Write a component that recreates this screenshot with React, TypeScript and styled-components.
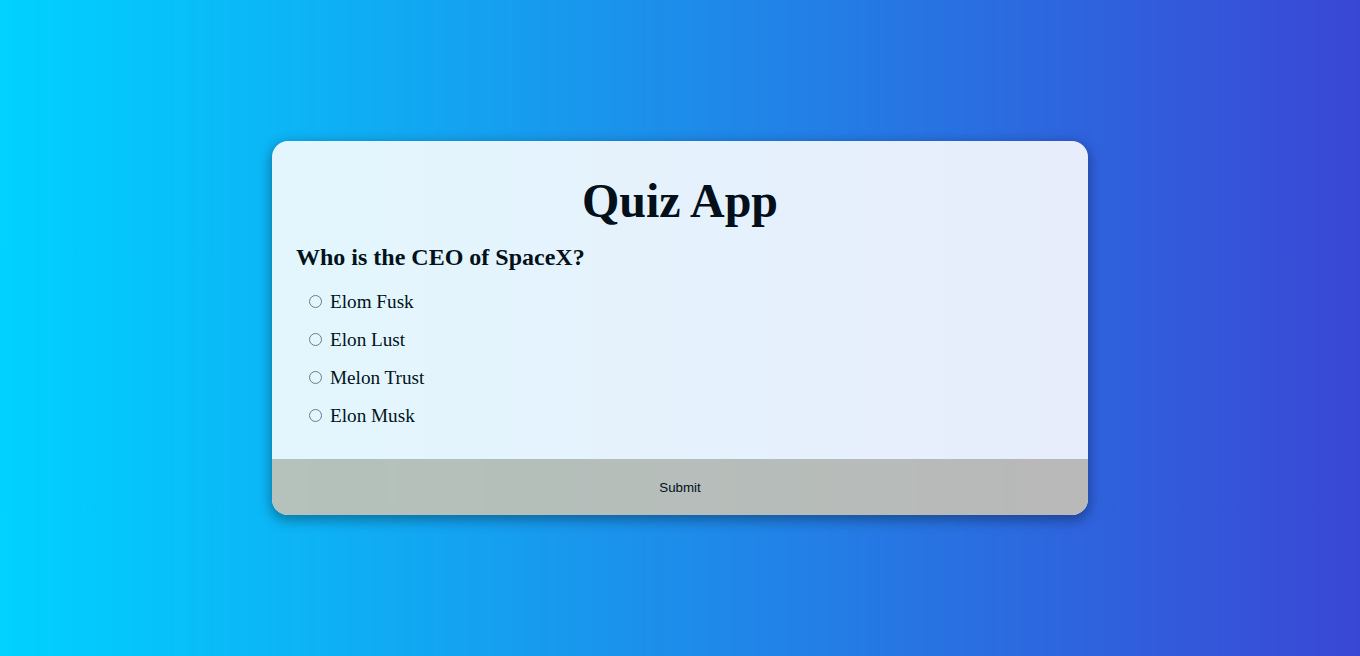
import React from "react";
import styled, { createGlobalStyle } from "styled-components";

const GlobalStyle = createGlobalStyle`
  html, body { margin: 0; padding: 0; }
  body {
    height: 100vh;
    background: linear-gradient(to right, #00d2ff, #3a47d5);
    font-family: "Liberation Serif", "Times New Roman", serif;
  }
  #root { height: 100%; }
`;

const Page = styled.div`
  height: 100%;
  display: flex;
  align-items: center;
  justify-content: center;
`;

const Card = styled.div`
  width: 816px;
  background: #ffffff;
  border-radius: 16px;
  overflow: hidden;
  opacity: 0.885;
  box-shadow: 0 4px 12px 2px rgba(0, 0, 0, 0.35);
`;

const Body = styled.div`
  padding: 32px 24px 32px;
`;

const Title = styled.h1`
  margin: 0;
  font-size: 48px;
  line-height: 55px;
  text-align: center;
  font-weight: bold;
  color: #000;
`;

const Question = styled.h2`
  margin: 15px 0 0;
  font-size: 24px;
  line-height: 28px;
  font-weight: bold;
  color: #000;
`;

const Options = styled.ul`
  list-style: none;
  margin: 20px 0 0;
  padding: 0 0 0 13px;
  display: flex;
  flex-direction: column;
  gap: 16px;
`;

const Option = styled.li`
  display: flex;
  align-items: center;
  gap: 8px;
  font-size: 19.2px;
  line-height: 22px;
  color: #000;
`;

const Radio = styled.input`
  margin: 0 0 2px;
  width: 13px;
  height: 13px;
`;

const SubmitButton = styled.button`
  display: block;
  width: 100%;
  height: 56px;
  border: none;
  margin: 0;
  background: #cac4b4;
  font-family: "Liberation Sans", Arial, sans-serif;
  font-size: 13.33px;
  color: #000;
  cursor: pointer;
`;

const answers = ["Elom Fusk", "Elon Lust", "Melon Trust", "Elon Musk"];

export default function App() {
  return (
    <>
      <GlobalStyle />
      <Page>
        <Card>
          <Body>
            <Title>Quiz App</Title>
            <Question>Who is the CEO of SpaceX?</Question>
            <Options>
              {answers.map((a) => (
                <Option key={a}>
                  <Radio type="radio" name="answer" id={a} />
                  <label htmlFor={a}>{a}</label>
                </Option>
              ))}
            </Options>
          </Body>
          <SubmitButton>Submit</SubmitButton>
        </Card>
      </Page>
    </>
  );
}
